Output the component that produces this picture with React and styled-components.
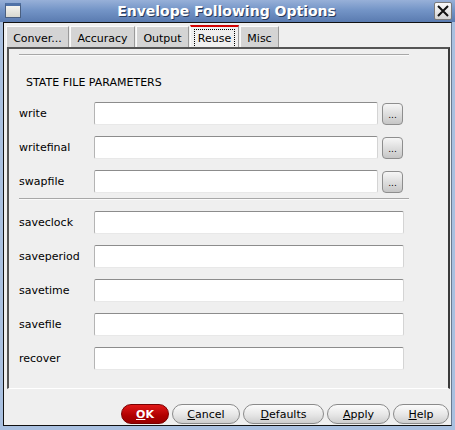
import React from "react";
import styled, { createGlobalStyle } from "styled-components";

const GlobalStyle = createGlobalStyle`
  html, body {
    margin: 0;
    padding: 0;
    background: #ffffff;
  }
`;

const Window = styled.div`
  width: 455px;
  height: 430px;
  box-sizing: border-box;
  display: flex;
  flex-direction: column;
  background: #a9c0e0;
  padding: 0 3px 4px 3px;
  font-family: "DejaVu Sans", "Liberation Sans", sans-serif;
  font-size: 11px;
  color: #000;
`;

const TitleBar = styled.div`
  height: 22px;
  margin: 0 -3px;
  display: flex;
  align-items: center;
  background: linear-gradient(180deg, #97b0d8 0%, #7495c7 45%, #5a7bb0 100%);
`;

const AppIcon = styled.div`
  width: 14px;
  height: 11px;
  margin-left: 5px;
  margin-top: -1px;
  border: 1px solid #4a5f80;
  border-top: 3px solid #4f72a8;
  background: linear-gradient(180deg, #f4f4f0, #d8d8d0);
`;

const Title = styled.div`
  flex: 1;
  text-align: center;
  font-weight: bold;
  font-size: 14px;
  color: #ffffff;
  text-shadow: 1px 1px 0 #2a3c5c;
  margin-right: 2px;
`;

const CloseButton = styled.div`
  width: 16px;
  height: 16px;
  margin-right: 3px;
  border: 1px solid #7a7a7a;
  border-radius: 2px;
  background: linear-gradient(180deg, #fafafa, #d4d4d4);
  display: flex;
  align-items: center;
  justify-content: center;
`;

const Content = styled.div`
  flex: 1;
  display: flex;
  flex-direction: column;
  background: #efefef;
  border: 1px solid #111;
  border-right-color: #6a7a90;
  padding: 2px 0 0 2px;
`;

const TabBar = styled.div`
  display: flex;
  height: 22px;
  align-items: flex-end;
  gap: 1px;
`;

const Tab = styled.div`
  box-sizing: border-box;
  height: ${(p) => (p.$active ? "22px" : "21px")};
  width: ${(p) => p.$w}px;
  display: flex;
  align-items: center;
  justify-content: center;
  background: ${(p) => (p.$active ? "#efefef" : "#d4d4d4")};
  border-top: ${(p) => (p.$active ? "2px solid #d40000" : "1px solid #fafafa")};
  border-left: 1px solid #fafafa;
  border-right: 1px solid #9a9a9a;
  padding-top: 3px;
`;

const FocusLabel = styled.span`
  border: 1px dotted #000;
  padding: 2px 3px;
`;

const Panel = styled.div`
  box-sizing: border-box;
  height: 342px;
  margin-left: 1px;
  margin-right: 1px;
  border: 2px solid #555555;
  border-bottom: 1px solid #ffffff;
  border-right-color: #3a3a3a;
  padding: 5px 0 0 10px;
`;

const Column = styled.div`
  width: 390px;
  display: flex;
  flex-direction: column;
`;

const Separator = styled.div`
  height: 0;
  border-top: 1px solid #a8a8a8;
  border-bottom: 1px solid #fafafa;
  margin-top: ${(p) => p.$top || 0}px;
  margin-bottom: ${(p) => p.$bottom || 0}px;
`;

const Heading = styled.div`
  padding-left: 7px;
  line-height: 13px;
  margin-bottom: 13px;
`;

const Rows = styled.div`
  display: flex;
  flex-direction: column;
  gap: 11px;
`;

const Row = styled.div`
  display: flex;
  align-items: center;
  height: 23px;
`;

const Label = styled.div`
  width: 75px;
  flex-shrink: 0;
`;

const Field = styled.div`
  box-sizing: border-box;
  width: ${(p) => p.$w}px;
  height: 23px;
  background: #ffffff;
  border-radius: 2px;
  border-top: 1px solid #8c8c8c;
  border-left: 1px solid #b4b4b4;
  border-right: 1px solid #d4d4d4;
  border-bottom: 1px solid #e8e8e8;
`;

const BrowseButton = styled.div`
  box-sizing: border-box;
  width: 21px;
  height: 22px;
  margin-left: 4px;
  border: 1px solid #8e8e8e;
  border-radius: 4px;
  background: linear-gradient(180deg, #f6f6f6, #c6c6c6);
  display: flex;
  align-items: flex-end;
  justify-content: center;
  font-size: 9px;
  line-height: 14px;
  padding-bottom: 2px;
`;

const Footer = styled.div`
  flex: 1;
  display: flex;
  align-items: flex-end;
  justify-content: flex-end;
  gap: 3px;
  padding: 0 2px 1px 0;
`;

const Button = styled.div`
  box-sizing: border-box;
  width: ${(p) => p.$w}px;
  height: 20px;
  border-radius: 10px;
  display: flex;
  align-items: center;
  justify-content: center;
  border: 1px solid ${(p) => (p.$primary ? "#7a0000" : "#8a8a8a")};
  background: ${(p) =>
    p.$primary
      ? "linear-gradient(180deg, #e01818, #b00000 60%, #980000)"
      : "linear-gradient(180deg, #fbfbfb, #e6e6e6 55%, #cdcdcd)"};
  color: ${(p) => (p.$primary ? "#ffffff" : "#000000")};
  font-weight: ${(p) => (p.$primary ? "bold" : "normal")};
  font-size: 11px;
  u {
    text-decoration: underline;
  }
`;

const tabs = [
  { name: "Conver...", w: 63 },
  { name: "Accuracy", w: 65 },
  { name: "Output", w: 53 },
  { name: "Reuse", w: 49, active: true },
  { name: "Misc", w: 39 },
];

const fileRows = ["write", "writefinal", "swapfile"];
const plainRows = ["saveclock", "saveperiod", "savetime", "savefile", "recover"];

const buttons = [
  { key: "O", rest: "K", w: 48, primary: true },
  { key: "C", rest: "ancel", w: 68 },
  { key: "D", rest: "efaults", w: 81 },
  { key: "A", rest: "pply", w: 63 },
  { key: "H", rest: "elp", w: 56 },
];

const App = () => {
  return (
    <>
      <GlobalStyle />
      <Window>
        <TitleBar>
          <AppIcon />
          <Title>Envelope Following Options</Title>
          <CloseButton>
            <svg width="14" height="14" viewBox="0 0 14 14">
              <path d="M2 2 L12 12 M12 2 L2 12" stroke="#111" strokeWidth="2" />
            </svg>
          </CloseButton>
        </TitleBar>
        <Content>
          <TabBar>
            {tabs.map((t) => (
              <Tab key={t.name} $w={t.w} $active={t.active}>
                {t.active ? <FocusLabel>{t.name}</FocusLabel> : t.name}
              </Tab>
            ))}
          </TabBar>
          <Panel>
            <Column>
              <Separator $bottom={20} />
              <Heading>STATE FILE PARAMETERS</Heading>
              <Rows>
                {fileRows.map((r) => (
                  <Row key={r}>
                    <Label>{r}</Label>
                    <Field $w={284} />
                    <BrowseButton>...</BrowseButton>
                  </Row>
                ))}
              </Rows>
              <Separator $top={5} $bottom={11} />
              <Rows>
                {plainRows.map((r) => (
                  <Row key={r}>
                    <Label>{r}</Label>
                    <Field $w={310} />
                  </Row>
                ))}
              </Rows>
            </Column>
          </Panel>
          <Footer>
            {buttons.map((b) => (
              <Button key={b.key} $w={b.w} $primary={b.primary}>
                <u>{b.key}</u>
                {b.rest}
              </Button>
            ))}
          </Footer>
        </Content>
      </Window>
    </>
  );
};

export default App;
